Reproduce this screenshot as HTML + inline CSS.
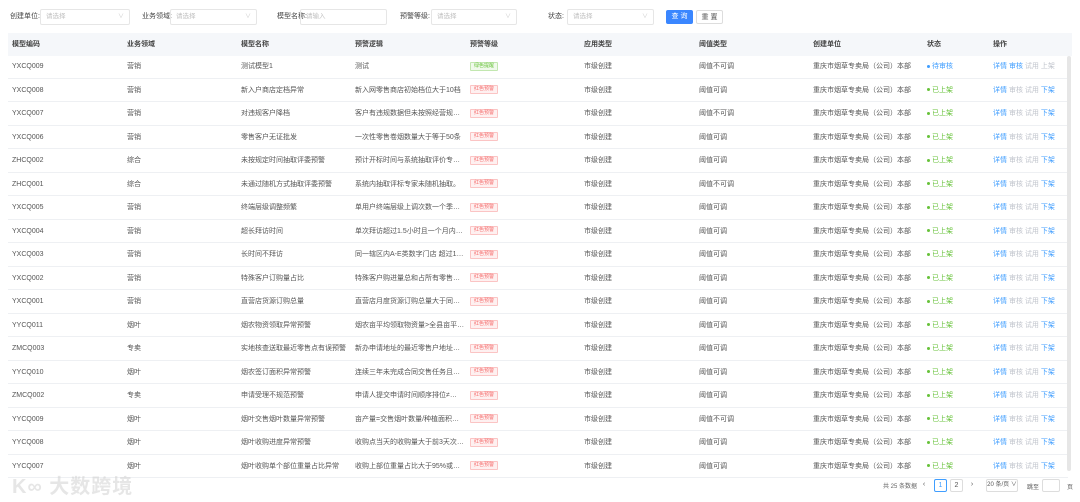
<!DOCTYPE html>
<html><head><meta charset="utf-8"><style>
*{margin:0;padding:0;box-sizing:border-box}
body{width:1080px;height:502px;background:#fff;font-family:"Liberation Sans","Noto Sans CJK SC",sans-serif;font-size:7px;color:#555;position:relative;overflow:hidden}
.lbl{position:absolute;top:13px;font-size:7px;color:#444;line-height:8px}
.sel{position:absolute;top:9px;height:16px;border:1px solid #e6e6e6;border-radius:2px;color:#c0c0c0;padding:0 5px;font-size:6.5px;line-height:14px}
.sel .ar{position:absolute;right:5px;top:0;color:#ccc;font-size:6px}
.btn{position:absolute;top:10px;height:14px;border-radius:2px;font-size:7px;text-align:center;line-height:13px}
.hdr{position:absolute;left:8px;top:33px;width:1064px;height:23px;background:#f5f7fa}
.row{position:absolute;left:8px;width:1060px;height:23.5px;border-bottom:1px solid #eef0f3}
.c{position:absolute;top:0;line-height:23px;white-space:nowrap}
.h{font-weight:bold;color:#444}
.tag{display:inline-block;font-size:5px;line-height:7px;padding:0 3px;border-radius:1px;vertical-align:middle}
.red{color:#f56c6c;background:#fef0f0;border:1px solid #fbc4c4}
.grn{color:#67c23a;background:#f0f9eb;border:1px solid #c2e7b0}
.dot{display:inline-block;width:3px;height:3px;border-radius:50%;margin-right:2px;vertical-align:middle}
.bl{color:#409eff}.gy{color:#c0c4cc}
.pg{position:absolute;top:479px;height:13px;border:1px solid #ddd;border-radius:2px;text-align:center;line-height:11px;font-size:7px;color:#555}
</style></head><body>
<div class="lbl" style="left:10px">创建单位:</div><div class="sel" style="left:40px;width:90px">请选择<span class="ar">∨</span></div>
<div class="lbl" style="left:142px">业务领域:</div><div class="sel" style="left:170px;width:87px">请选择<span class="ar">∨</span></div>
<div class="lbl" style="left:277px">模型名称:</div><div class="sel" style="left:300px;width:87px">请输入</div>
<div class="lbl" style="left:400px">预警等级:</div><div class="sel" style="left:431px;width:86px">请选择<span class="ar">∨</span></div>
<div class="lbl" style="left:548px">状态:</div><div class="sel" style="left:567px;width:87px">请选择<span class="ar">∨</span></div>
<div class="btn" style="left:666px;width:27px;background:#3a86ff;color:#fff">查 询</div>
<div class="btn" style="left:696px;width:27px;border:1px solid #ddd;color:#555">重 置</div>
<div class="hdr"></div>
<div id="t"></div>
<div style="position:absolute;left:1067px;top:56px;width:4px;height:415px;background:#e6e6e6;border-radius:2px"></div>
<div style="position:absolute;left:12px;top:470px;font-size:20px;color:rgba(205,205,205,.5);font-weight:bold;letter-spacing:1px">K∞ 大数跨境</div>
<div style="position:absolute;left:883px;top:481px;font-size:6px;color:#666">共 25 条数据</div>
<div class="pg" style="left:918px;width:12px;border:none">‹</div>
<div class="pg" style="left:934px;width:13px;color:#409eff;border-color:#409eff">1</div>
<div class="pg" style="left:950px;width:13px">2</div>
<div class="pg" style="left:966px;width:12px;border:none">›</div>
<div class="pg" style="left:986px;width:32px;font-size:6px">20 条/页 ∨</div>
<div style="position:absolute;left:1027px;top:482px;font-size:6px;color:#555">跳至</div>
<div class="pg" style="left:1042px;width:18px"></div>
<div style="position:absolute;left:1067px;top:482px;font-size:6px;color:#555">页</div>
<script>
var X=[4,119,233,347,462,576,691,805,919,985];
var H=["模型编码","业务领域","模型名称","预警逻辑","预警等级","应用类型","阈值类型","创建单位","状态","操作"];
var D=[["YXCQ009","营销","测试模型1","测试",0,"阈值不可调",0],
["YXCQ008","营销","新入户商店定档异常","新入网零售商店初始档位大于10档",1,"阈值可调",1],
["YXCQ007","营销","对违规客户降档","客户有违规数据但未按照经营规…",1,"阈值不可调",1],
["YXCQ006","营销","零售客户无证批发","一次性零售卷烟数量大于等于50条",1,"阈值可调",1],
["ZHCQ002","综合","未按规定时间抽取评委预警","预计开标时间与系统抽取评价专…",1,"阈值可调",1],
["ZHCQ001","综合","未通过随机方式抽取评委预警","系统内抽取评标专家未随机抽取。",1,"阈值不可调",1],
["YXCQ005","营销","终端层级调整频繁","单用户终端层级上调次数一个季…",1,"阈值可调",1],
["YXCQ004","营销","超长拜访时间","单次拜访超过1.5小时且一个月内…",1,"阈值可调",1],
["YXCQ003","营销","长时间不拜访","同一辖区内A-E类数字门店 超过1…",1,"阈值可调",1],
["YXCQ002","营销","特殊客户订购量占比","特殊客户购进量总和占所有零售…",1,"阈值可调",1],
["YXCQ001","营销","直营店货源订购总量","直营店月度货源订购总量大于同…",1,"阈值可调",1],
["YYCQ011","烟叶","烟农物资领取异常预警","烟农亩平均领取物资量>全县亩平…",1,"阈值可调",1],
["ZMCQ003","专卖","实地核查送取最近零售点有误预警","新办申请地址的最近零售户地址…",1,"阈值可调",1],
["YYCQ010","烟叶","烟农签订面积异常预警","连续三年未完成合同交售任务且…",1,"阈值可调",1],
["ZMCQ002","专卖","申请受理不规范预警","申请人提交申请时间顺序排位≠…",1,"阈值可调",1],
["YYCQ009","烟叶","烟叶交售烟叶数量异常预警","亩产量=交售烟叶数量/种植面积…",1,"阈值不可调",1],
["YYCQ008","烟叶","烟叶收购进度异常预警","收购点当天的收购量大于前3天次…",1,"阈值可调",1],
["YYCQ007","烟叶","烟叶收购单个部位重量占比异常","收购上部位重量占比大于95%或…",1,"阈值可调",1]];
var s='<div style="position:absolute;left:8px;top:33px">';
H.forEach(function(h,i){s+='<div class="c h" style="left:'+X[i]+'px">'+h+'</div>'});
s+='</div>';
D.forEach(function(r,k){
var top=55+k*23.5;
var cells=[r[0],r[1],r[2],r[3],
r[4]?'<span class="tag red">红色预警</span>':'<span class="tag grn">绿色提醒</span>',
"市级创建",r[5],"重庆市烟草专卖局（公司）本部",
r[6]?'<span style="color:#67c23a"><span class="dot" style="background:#67c23a"></span>已上架</span>':'<span class="bl"><span class="dot" style="background:#409eff"></span>待审核</span>',
r[6]?'<span class="bl">详情</span> <span class="gy">审核</span> <span class="gy">试用</span> <span class="bl">下架</span>':'<span class="bl">详情</span> <span class="bl">审核</span> <span class="gy">试用</span> <span class="gy">上架</span>'];
s+='<div class="row" style="top:'+top+'px">';
cells.forEach(function(c,i){s+='<div class="c" style="left:'+X[i]+'px">'+c+'</div>'});
s+='</div>';});
document.getElementById('t').innerHTML=s;
</script>
</body></html>
